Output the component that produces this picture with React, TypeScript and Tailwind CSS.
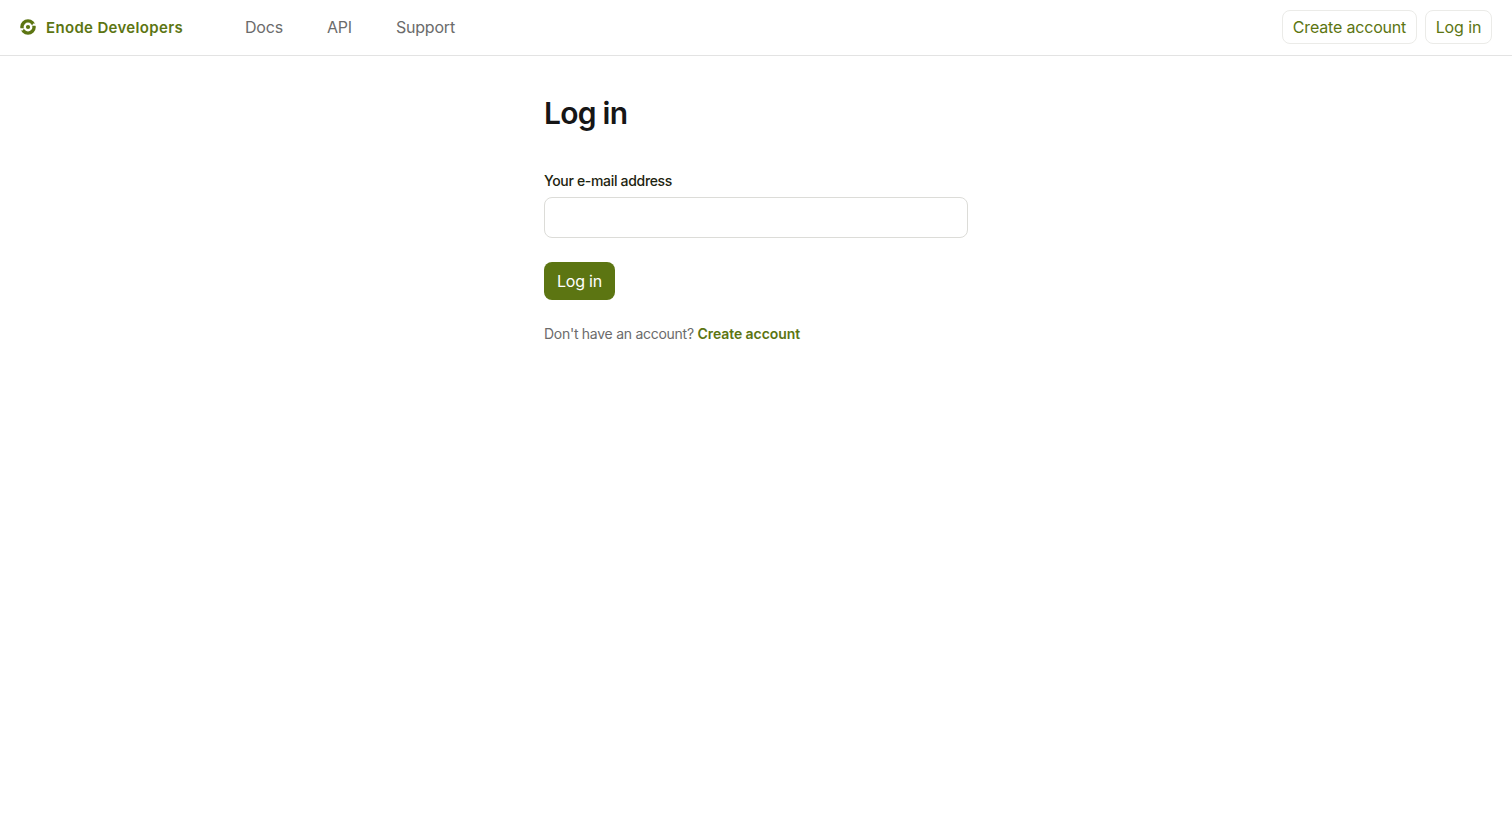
export default function App() {
  const font = "font-['Inter','Liberation_Sans',sans-serif]";
  return (
    <div className={`${font} min-h-[814px] bg-white`}>
      <header className="flex h-[56px] items-center justify-between border-b border-[#e3e3e3] pl-5 pr-5">
        <div className="flex items-center">
          <a className="flex items-center gap-[10px]">
            <svg width="16" height="16" viewBox="0 0 16 16" fill="none" className="shrink-0 -translate-y-px">
              <circle cx="8" cy="8" r="6.1" stroke="#5c7512" strokeWidth="3.4" />
              <circle cx="8" cy="8" r="2.1" fill="#5c7512" />
              <path d="M-0.5 9.2L4.2 9.2L2.6 11.6L0.5 11.6z" fill="#fff" />
              <path d="M16.5 6.8L11.8 6.8L13.4 4.4L15.5 4.4z" fill="#fff" />
            </svg>
            <span className="text-[15px] font-semibold leading-none tracking-[0.33px] text-[#5c7512]">Enode Developers</span>
          </a>
          <nav className="ml-[62px] flex -translate-y-px items-center gap-[44px] text-[16px] tracking-[-0.2px] text-[#6b6b6b]">
            <a>Docs</a>
            <a>API</a>
            <a>Support</a>
          </nav>
        </div>
        <div className="flex -translate-y-px items-center gap-2">
          <button className="h-[34px] w-[135px] rounded-lg border border-[#ebebe8] text-[16px] leading-[30px] tracking-[-0.18px] text-[#5c7512]">Create account</button>
          <button className="h-[34px] w-[67px] rounded-lg border border-[#ebebe8] text-[16px] leading-[30px] tracking-[-0.1px] text-[#5c7512]">Log in</button>
        </div>
      </header>
      <main className="ml-[544px] w-[424px] pt-[40px]">
        <h1 className="text-[30px] font-semibold leading-[34px] tracking-[-0.75px] text-[#161616]">Log in</h1>
        <label className="mt-[41px] block text-[14px] font-medium leading-[20px] tracking-[-0.32px] text-[#1d2410]">Your e-mail address</label>
        <input className="mt-[6px] block h-[41px] w-full rounded-lg border border-[#dcdcd8] bg-white" />
        <button className="mt-6 block h-[38px] w-[71px] rounded-lg bg-[#5c7512] text-[16px] tracking-[-0.2px] text-white">Log in</button>
        <p className="mt-6 text-[14px] leading-[20px] tracking-[-0.27px] text-[#6b6b6b]">
          Don't have an account? <a className="font-semibold tracking-[-0.07px] text-[#5c7512]">Create account</a>
        </p>
      </main>
    </div>
  );
}
